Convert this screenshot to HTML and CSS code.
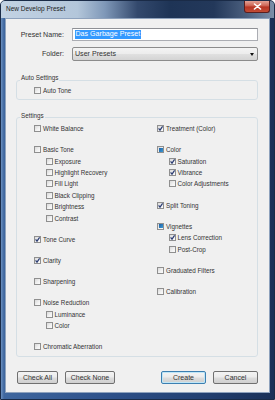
FILE: index.html
```html
<!DOCTYPE html>
<html>
<head>
<meta charset="utf-8">
<link rel="stylesheet" href="styles.css">
</head>
<body>
<div class="window">
  <div class="titlebar">
    <span class="title">New Develop Preset</span>
    <span class="close"><svg width="9" height="7" viewBox="0 0 9 7"><path d="M1.5 1 L7.5 6 M7.5 1 L1.5 6" stroke="#fff" stroke-width="1.6" stroke-linecap="round"/></svg></span>
  </div>
  <div class="client">
    <div class="field">
      <span class="field-label">Preset Name:</span>
      <div class="textbox"><span class="sel">Das Garbage Preset</span></div>
    </div>
    <div class="field field-folder">
      <span class="field-label">Folder:</span>
      <div class="select"><span>User Presets</span><span class="arrow"></span></div>
    </div>

    <fieldset class="group group-auto">
      <legend>Auto Settings</legend>
      <div class="group-body">
        <div class="cb"><span class="box"></span>Auto Tone</div>
      </div>
    </fieldset>

    <fieldset class="group group-settings">
      <legend>Settings</legend>
      <div class="group-body cols">
        <div class="col">
          <div class="grp">
            <div class="cb"><span class="box"></span>White Balance</div>
          </div>
          <div class="grp">
            <div class="cb"><span class="box"></span>Basic Tone</div>
            <div class="cb sub"><span class="box"></span>Exposure</div>
            <div class="cb sub"><span class="box"></span>Highlight Recovery</div>
            <div class="cb sub"><span class="box"></span>Fill Light</div>
            <div class="cb sub"><span class="box"></span>Black Clipping</div>
            <div class="cb sub"><span class="box"></span>Brightness</div>
            <div class="cb sub"><span class="box"></span>Contrast</div>
          </div>
          <div class="grp">
            <div class="cb"><span class="box checked"><svg viewBox="0 0 7 7"><path d="M1.6 3.4 L3 5.2 L5.6 1.3"/></svg></span>Tone Curve</div>
          </div>
          <div class="grp">
            <div class="cb"><span class="box checked"><svg viewBox="0 0 7 7"><path d="M1.6 3.4 L3 5.2 L5.6 1.3"/></svg></span>Clarity</div>
          </div>
          <div class="grp">
            <div class="cb"><span class="box"></span>Sharpening</div>
          </div>
          <div class="grp">
            <div class="cb"><span class="box"></span>Noise Reduction</div>
            <div class="cb sub"><span class="box"></span>Luminance</div>
            <div class="cb sub"><span class="box"></span>Color</div>
          </div>
          <div class="grp">
            <div class="cb"><span class="box"></span>Chromatic Aberration</div>
          </div>
        </div>
        <div class="col">
          <div class="grp">
            <div class="cb"><span class="box checked"><svg viewBox="0 0 7 7"><path d="M1.6 3.4 L3 5.2 L5.6 1.3"/></svg></span>Treatment (Color)</div>
          </div>
          <div class="grp">
            <div class="cb"><span class="box mixed"><span class="fill"></span></span>Color</div>
            <div class="cb sub"><span class="box checked"><svg viewBox="0 0 7 7"><path d="M1.6 3.4 L3 5.2 L5.6 1.3"/></svg></span>Saturation</div>
            <div class="cb sub"><span class="box checked"><svg viewBox="0 0 7 7"><path d="M1.6 3.4 L3 5.2 L5.6 1.3"/></svg></span>Vibrance</div>
            <div class="cb sub"><span class="box"></span>Color Adjustments</div>
          </div>
          <div class="grp">
            <div class="cb"><span class="box checked"><svg viewBox="0 0 7 7"><path d="M1.6 3.4 L3 5.2 L5.6 1.3"/></svg></span>Split Toning</div>
          </div>
          <div class="grp">
            <div class="cb"><span class="box mixed"><span class="fill"></span></span>Vignettes</div>
            <div class="cb sub"><span class="box checked"><svg viewBox="0 0 7 7"><path d="M1.6 3.4 L3 5.2 L5.6 1.3"/></svg></span>Lens Correction</div>
            <div class="cb sub"><span class="box"></span>Post-Crop</div>
          </div>
          <div class="grp">
            <div class="cb"><span class="box"></span>Graduated Filters</div>
          </div>
          <div class="grp">
            <div class="cb"><span class="box"></span>Calibration</div>
          </div>
        </div>
      </div>
    </fieldset>

    <div class="buttons">
      <span class="btn btn-all">Check All</span>
      <span class="btn btn-none">Check None</span>
      <span class="btn btn-create">Create</span>
      <span class="btn btn-cancel">Cancel</span>
    </div>
  </div>
</div>
</body>
</html>
```
FILE: styles.css
```css
html, body {
  margin: 0;
  padding: 0;
}
body {
  width: 275px;
  height: 400px;
  overflow: hidden;
  font-family: "Liberation Sans", Arial, sans-serif;
  color: #222;
  background: #fff;
}
.window {
  width: 275px;
  height: 400px;
  box-sizing: border-box;
  display: flex;
  flex-direction: column;
  border: 1px solid #1a2b47;
  border-radius: 5px 5px 0 0;
  background: linear-gradient(to right, #6b8fbe 0, #3f679f 3px, #2d5089 40%, #223f70 75%, #1a3057 100%);
  overflow: hidden;
}
.titlebar {
  height: 17px;
  display: flex;
  align-items: flex-start;
  padding: 0 4px 0 5px;
  background: linear-gradient(to right, #c2d2e3 0, #b3c6da 28%, #7f98b8 38%, #33496d 50%, #1e3456 62%, #23385a 78%, #4c607f 90%, #7c8fa9 100%);
}
.title {
  font-size: 6.5px;
  line-height: 7px;
  margin-top: 4px;
  color: #1c1c1c;
}
.close {
  margin-left: auto;
  width: 26px;
  height: 12px;
  box-sizing: border-box;
  border: 1px solid #5a1f1f;
  border-top: none;
  border-radius: 0 0 3px 3px;
  background: linear-gradient(#e3a195 0, #cf6a5a 40%, #b73524 55%, #c24c35 100%);
  display: flex;
  align-items: center;
  justify-content: center;
}
.close svg {
  display: block;
}
.client {
  flex: 1;
  margin: 0 4px 6px 4px;
  background: #f0f0f0;
  border: 1px solid #8ea2bd;
  padding: 9px 11px 0 10px;
  display: flex;
  flex-direction: column;
}
.field {
  display: flex;
  align-items: center;
  gap: 8px;
}
.field-label {
  width: 48px;
  flex: none;
  text-align: right;
  font-size: 7.1px;
  color: #333;
}
.textbox {
  flex: 1;
  height: 13px;
  box-sizing: border-box;
  border: 1px solid #abadb3;
  border-top-color: #8e9095;
  background: #fff;
  padding-left: 2px;
  display: flex;
  align-items: center;
  font-size: 7.1px;
}
.sel {
  background: #3399ff;
  color: #fff;
  line-height: 8.5px;
  padding: 0 0.5px;
}
.field-folder {
  margin-top: 6px;
}
.select {
  flex: 1;
  height: 14px;
  box-sizing: border-box;
  border: 1px solid #8c8c8c;
  border-radius: 2px;
  background: linear-gradient(#f4f4f4 0, #ececec 50%, #e0e0e0 52%, #d4d4d4 100%);
  display: flex;
  align-items: center;
  padding: 0 3px 0 2px;
  font-size: 7.1px;
  color: #333;
}
.arrow {
  margin-left: auto;
  width: 0;
  height: 0;
  border-left: 2.5px solid transparent;
  border-right: 2.5px solid transparent;
  border-top: 3px solid #111;
}
.group {
  margin: 0;
  min-width: 0;
  border: 1px solid #d5dfe5;
  border-radius: 3px;
  padding: 0 3px 3px 3px;
}
.group legend {
  font-size: 6.3px;
  line-height: 6px;
  padding: 0 1px 4px;
  color: #333;
}
.group-auto {
  margin-top: 14px;
}
.group-settings {
  margin-top: 12.5px;
}
.group-body {
  padding-left: 14px;
}
.cols {
  display: grid;
  grid-template-columns: 123px 1fr;
}
.col {
  display: flex;
  flex-direction: column;
  gap: 9.8px;
}
.grp {
  display: flex;
  flex-direction: column;
}
.cb {
  height: 11.4px;
  display: flex;
  align-items: center;
  font-size: 6.3px;
  color: #333;
  white-space: nowrap;
}
.cb.sub {
  margin-left: 11.5px;
}
.box {
  width: 7px;
  height: 7px;
  box-sizing: border-box;
  flex: none;
  margin-right: 2px;
  border: 1px solid #8f8f8f;
  background: linear-gradient(135deg, #d9d9d9 0, #f2f2f2 60%, #fbfbfb 100%);
  display: flex;
  align-items: center;
  justify-content: center;
}
.box svg {
  width: 7px;
  height: 7px;
  flex: none;
  display: block;
}
.box svg path {
  fill: none;
  stroke: #2c3d73;
  stroke-width: 1.2;
}
.box .fill {
  width: 4px;
  height: 4px;
  background: linear-gradient(135deg, #1d5fa3, #3c9ad6);
}
.buttons {
  display: flex;
  margin-top: 14px;
  padding-left: 1px;
}
.btn {
  height: 13px;
  box-sizing: border-box;
  border: 1px solid #707070;
  border-radius: 2px;
  background: linear-gradient(#f3f3f3 0, #ebebeb 48%, #dddddd 52%, #cfcfcf 100%);
  font-size: 7px;
  color: #333;
  display: flex;
  align-items: center;
  justify-content: center;
}
.btn-all {
  width: 41px;
}
.btn-none {
  width: 50px;
  margin-left: 7px;
}
.btn-create {
  width: 45px;
  margin-left: auto;
  border-color: #3c7fb1;
  box-shadow: inset 0 0 0 1px #bfe6f7;
}
.btn-cancel {
  width: 45px;
  margin-left: 7px;
}
```
